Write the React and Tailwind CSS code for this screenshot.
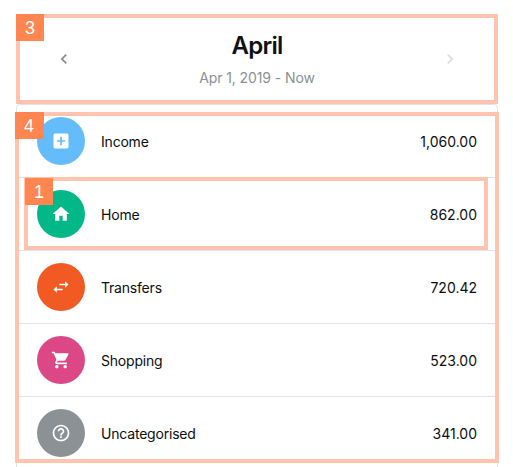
import { MdAddBox, MdHome, MdSwapHoriz, MdShoppingCart, MdHelpOutline, MdChevronLeft, MdChevronRight } from "react-icons/md";

const rows = [
  { name: "Income", amount: "1,060.00", color: "bg-[#64bdfa]", Icon: MdAddBox },
  { name: "Home", amount: "862.00", color: "bg-[#03b888]", Icon: MdHome },
  { name: "Transfers", amount: "720.42", color: "bg-[#f15a22]", Icon: MdSwapHoriz },
  { name: "Shopping", amount: "523.00", color: "bg-[#dc4886]", Icon: MdShoppingCart },
  { name: "Uncategorised", amount: "341.00", color: "bg-[#8b9194]", Icon: MdHelpOutline },
];

function Badge({ children, className }) {
  return (
    <span className={`absolute flex h-[27px] items-center justify-center bg-[#ff8650] font-['Liberation_Sans',sans-serif] text-[18px] leading-none text-white ${className}`}>
      {children}
    </span>
  );
}

function Row({ name, amount, color, Icon }) {
  return (
    <li className="flex h-[73px] items-center border-b border-[#dde3e9] px-5 last:h-[72px] last:border-b-0">
      <span className={`flex size-12 shrink-0 items-center justify-center rounded-full text-white ${color}`}>
        <Icon size={20} />
      </span>
      <span className="ml-4 flex-1 pt-[2px] text-[14px] leading-5 tracking-[-0.2px] text-[#0c0e10]">{name}</span>
      <span className="pt-[2px] text-[14px] leading-5 text-[#0c0e10]">{amount}</span>
    </li>
  );
}

export default function App() {
  return (
    <main className="relative h-[467px] w-[513px] overflow-hidden bg-white pt-[14px] pl-4 font-['Inter',sans-serif]">
      <header className="relative flex h-[90px] w-[482px] justify-between border-4 border-[#ffc3ae] px-[34px]">
        <Badge className="-top-1 -left-1 w-7">3</Badge>
        <MdChevronLeft size={20} className="mt-[31px] text-[#858b8f]" />
        <div className="flex flex-col items-center">
          <h1 className="mt-[12px] text-[24px] leading-8 font-semibold tracking-[-0.8px] text-[#0f1113]">April</h1>
          <p className="mt-[6px] text-[14px] leading-5 tracking-[-0.1px] text-[#8b9194]">Apr 1, 2019 - Now</p>
        </div>
        <MdChevronRight size={20} className="mt-[31px] text-[#dcdddd]" />
      </header>
      <ul className="h-[380px] w-[482px] rounded-t-[4px] border border-[#dde3e9]">
        {rows.map((row) => (
          <Row key={row.name} {...row} />
        ))}
      </ul>
      <div className="absolute top-[112px] left-[15px] h-[351px] w-[484px] border-4 border-[#ffc3ae]">
        <Badge className="-top-1 -left-1 w-[29px] pr-px">4</Badge>
      </div>
      <div className="absolute top-[177px] left-6 h-[73px] w-[464px] border-4 border-[#ffc3ae]">
        <Badge className="-top-[3px] -left-[3px] w-7">1</Badge>
      </div>
    </main>
  );
}
